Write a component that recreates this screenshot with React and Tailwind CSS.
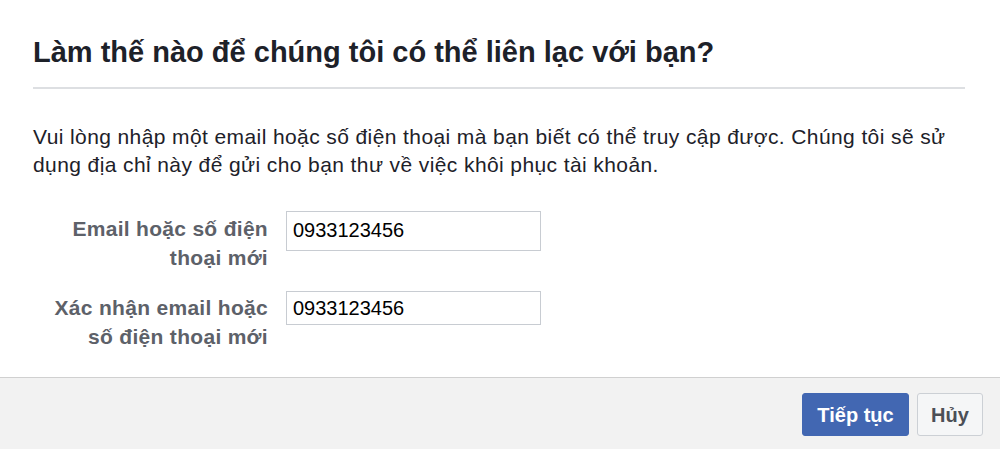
import React from 'react';

const font = { fontFamily: '"Liberation Sans", Arial, sans-serif' };

const App = () => {
    return (
        <div className="flex h-[449px] w-[1000px] flex-col bg-white text-[#1d2129] [font-family:'Liberation_Sans',Arial,sans-serif]">
            <div className="flex-1 pl-[33px] pr-[35px] pt-[34px]">
                <h2 className="text-[29px] font-bold leading-[36px] text-[#1d2129]">
                    Làm thế nào để chúng tôi có thể liên lạc với bạn?
                </h2>
                <div className="mt-[17px] h-[2px] bg-[#dddfe2]" />

                <p className="mt-[34px] text-[21px] leading-[28px] tracking-[0.4px] text-[#1d2129]">
                    Vui lòng nhập một email hoặc số điện thoại mà bạn biết có thể truy cập được. Chúng tôi sẽ sử dụng địa chỉ này để gửi cho bạn thư về việc khôi phục tài khoản.
                </p>

                <div className="mt-[32px] flex flex-col gap-[19px]">
                    <div className="flex items-start">
                        <label className="ml-[10px] w-[225px] pt-[3px] text-right text-[21px] font-bold leading-[29px] tracking-[0.3px] text-[#5d6169]">
                            Email hoặc số điện thoại mới
                        </label>
                        <input
                            type="text"
                            defaultValue="0933123456"
                            className="ml-[18px] h-[40px] w-[255px] border border-[#c8ccd2] bg-white px-[6px] pb-[2px] text-[20px] text-black outline-none"
                        />
                    </div>
                    <div className="flex items-start">
                        <label className="ml-[10px] w-[225px] pt-[2px] text-right text-[21px] font-bold leading-[29px] tracking-[0.3px] text-[#5d6169]">
                            Xác nhận email hoặc số điện thoại mới
                        </label>
                        <input
                            type="text"
                            defaultValue="0933123456"
                            className="ml-[18px] h-[34px] w-[255px] border border-[#c8ccd2] bg-white px-[6px] text-[20px] text-black outline-none"
                        />
                    </div>
                </div>
            </div>

            <div className="flex h-[72px] items-start justify-end gap-[8px] border-t border-[#d0d0d0] bg-[#f2f2f2] pr-[17px] pt-[15px]">
                <button
                    type="button"
                    style={font}
                    className="h-[43px] w-[107px] rounded-[3px] border border-[#4267b2] bg-[#4267b2] text-[20px] font-bold text-white"
                >
                    Tiếp tục
                </button>
                <button
                    type="button"
                    style={font}
                    className="h-[43px] w-[66px] rounded-[3px] border border-[#ccd0d5] bg-[#f5f6f7] text-[20px] font-bold text-[#4b4f56]"
                >
                    Hủy
                </button>
            </div>
        </div>
    );
};

export default App;
